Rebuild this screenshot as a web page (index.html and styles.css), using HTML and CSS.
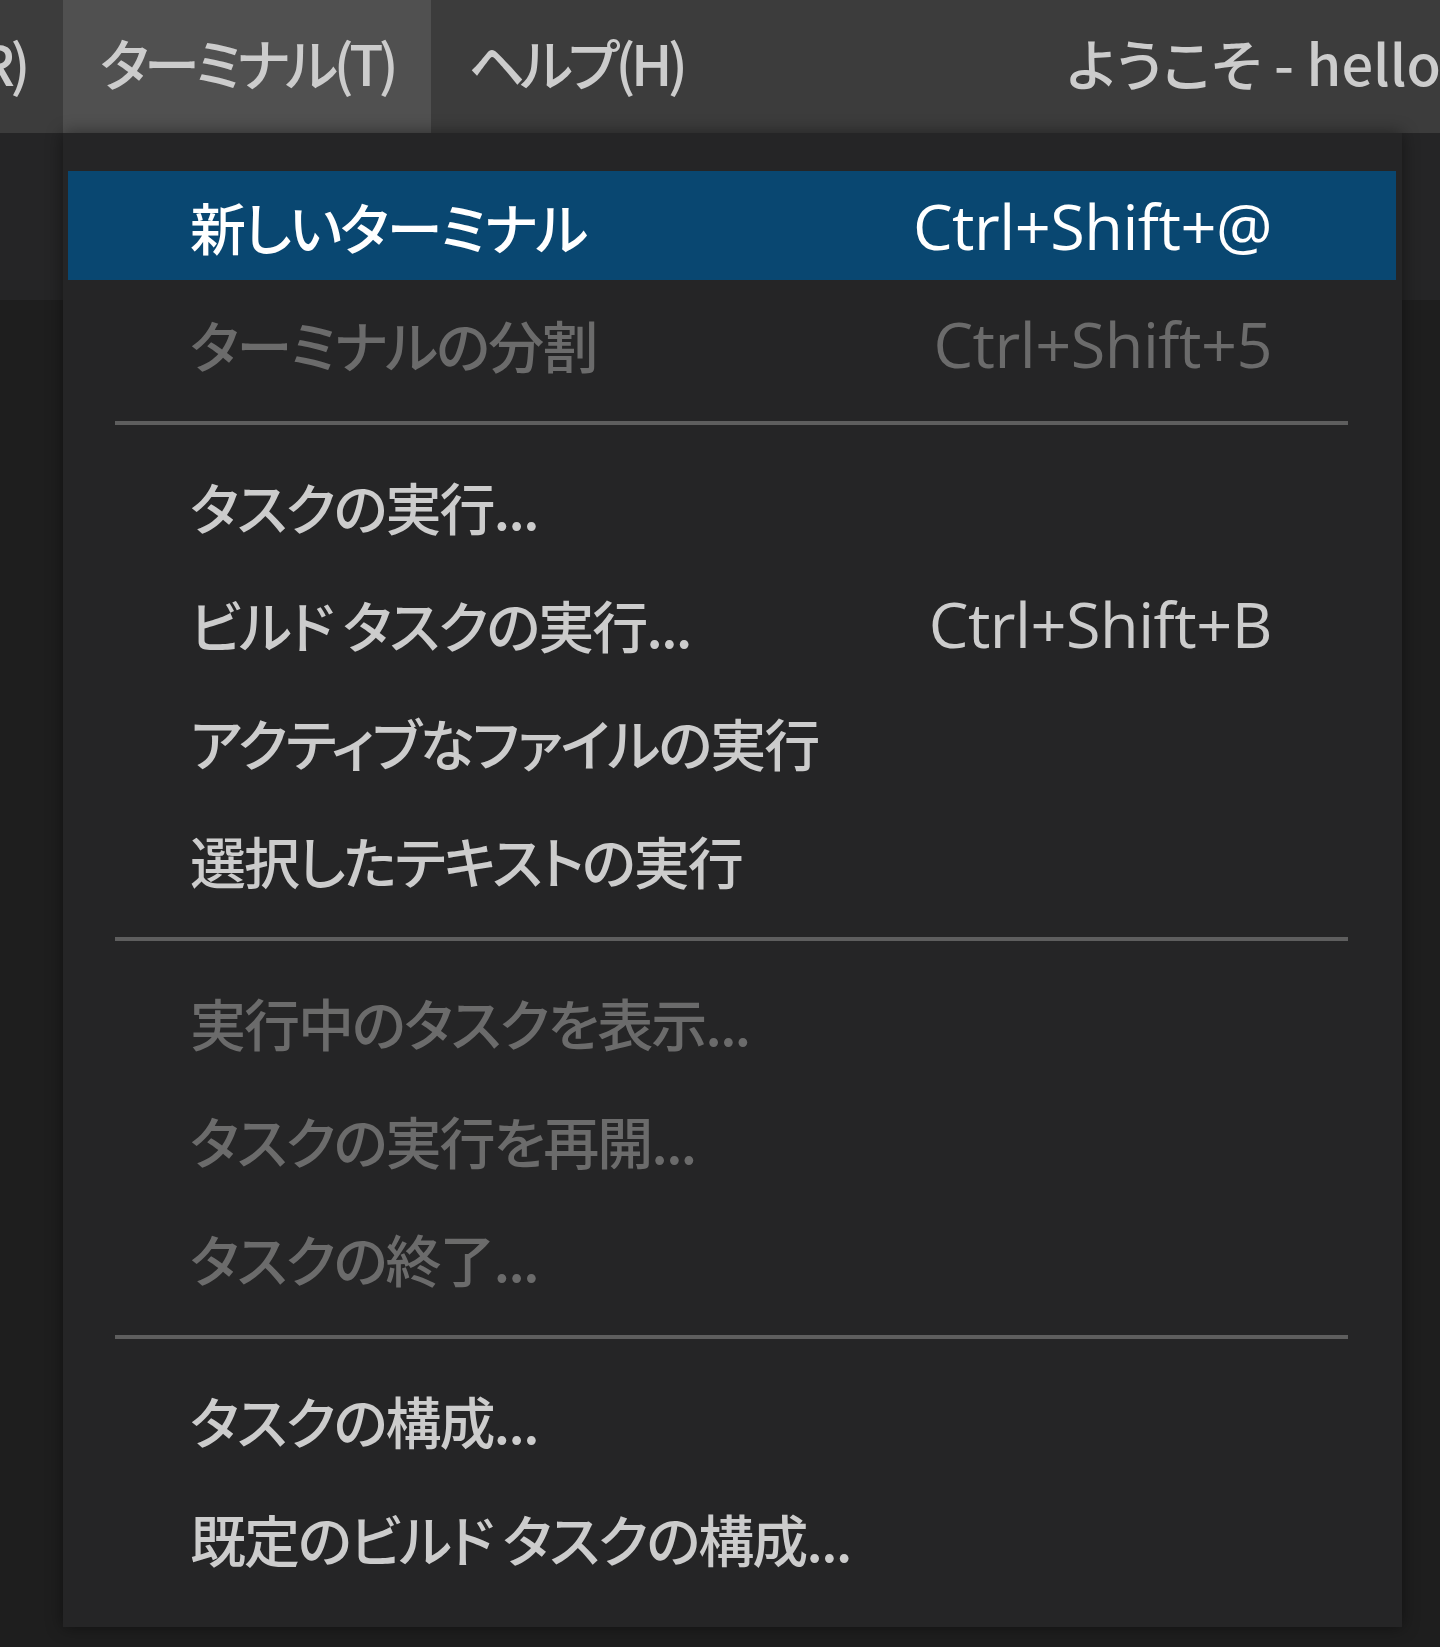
FILE: index.html
```html
<!DOCTYPE html>
<html lang="ja">
<head>
<meta charset="utf-8">
<title>Terminal menu</title>
<link rel="stylesheet" href="styles.css">
</head>
<body>
<div class="titlebar">
  <div class="menubar">
    <div class="clip"><span class="mi">実行(R)</span></div>
    <span class="mi active">ターミナル(T)</span>
    <span class="mi">ヘルプ(H)</span>
  </div>
  <div class="title">ようこそ - helloworld - Visual Studio Code</div>
</div>
<div class="workbench">
  <div class="tabbar"></div>
  <div class="editor"></div>
</div>
<div class="menu">
  <div class="item focused"><span class="label">新しいターミナル</span><span class="key">Ctrl+Shift+@</span></div>
  <div class="item disabled"><span class="label">ターミナルの分割</span><span class="key">Ctrl+Shift+5</span></div>
  <div class="sep"></div>
  <div class="item"><span class="label">タスクの実行...</span></div>
  <div class="item"><span class="label">ビルド タスクの実行...</span><span class="key">Ctrl+Shift+B</span></div>
  <div class="item"><span class="label">アクティブなファイルの実行</span></div>
  <div class="item"><span class="label">選択したテキストの実行</span></div>
  <div class="sep"></div>
  <div class="item disabled"><span class="label">実行中のタスクを表示...</span></div>
  <div class="item disabled"><span class="label">タスクの実行を再開...</span></div>
  <div class="item disabled"><span class="label">タスクの終了...</span></div>
  <div class="sep"></div>
  <div class="item"><span class="label">タスクの構成...</span></div>
  <div class="item"><span class="label">既定のビルド タスクの構成...</span></div>
</div>
</body>
</html>
```
FILE: styles.css
```css
html, body {
  margin: 0;
  padding: 0;
}
body {
  width: 1440px;
  height: 1647px;
  overflow: hidden;
  background: #1e1e1e;
  font-family: "Noto Sans CJK JP", "Noto Sans", sans-serif;
  font-feature-settings: "palt";
  font-size: 56px;
  font-weight: 500;
  color: #cccccc;
}
.titlebar {
  height: 133px;
  background: #3c3c3c;
  display: grid;
  grid-template-columns: 1067px 1fr;
}
.menubar {
  display: flex;
  align-items: stretch;
}
.clip {
  width: 63px;
  overflow: hidden;
  display: flex;
  justify-content: flex-end;
}
.mi {
  display: flex;
  align-items: center;
  padding: 0 37px 10px;
  white-space: nowrap;
  letter-spacing: -4.5px;
  color: #cccccc;
}
.mi.active {
  background: #505050;
}
.title {
  display: flex;
  align-items: center;
  padding-bottom: 10px;
  white-space: nowrap;
  overflow: hidden;
  color: #cccccc;
}
.workbench {
  display: flex;
  flex-direction: column;
  height: 1514px;
}
.tabbar {
  height: 167px;
  background: #252526;
}
.editor {
  flex: 1;
  background: #1e1e1e;
}
.menu {
  position: absolute;
  left: 63px;
  top: 133px;
  width: 1339px;
  box-sizing: border-box;
  padding: 34px 0 30px;
  background: #252526;
  display: flex;
  flex-direction: column;
  box-shadow: 0 0 16px rgba(0, 0, 0, 0.45);
}
.item {
  height: 109px;
  margin: 4px 6px 5px 5px;
  padding: 0 124px 0 122px;
  display: flex;
  align-items: center;
  justify-content: space-between;
  white-space: nowrap;
  color: #cccccc;
}
.label {
  letter-spacing: -2px;
}
.key {
  font-family: "Open Sans", "Noto Sans", sans-serif;
  font-size: 63px;
  font-weight: 500;
  letter-spacing: -0.5px;
}
.item.focused {
  background: #094771;
  color: #ffffff;
}
.item.disabled {
  color: #6b6b6b;
}
.sep {
  height: 4px;
  margin: 18px 54px 22px 52px;
  background: #5e5e5e;
}
```
